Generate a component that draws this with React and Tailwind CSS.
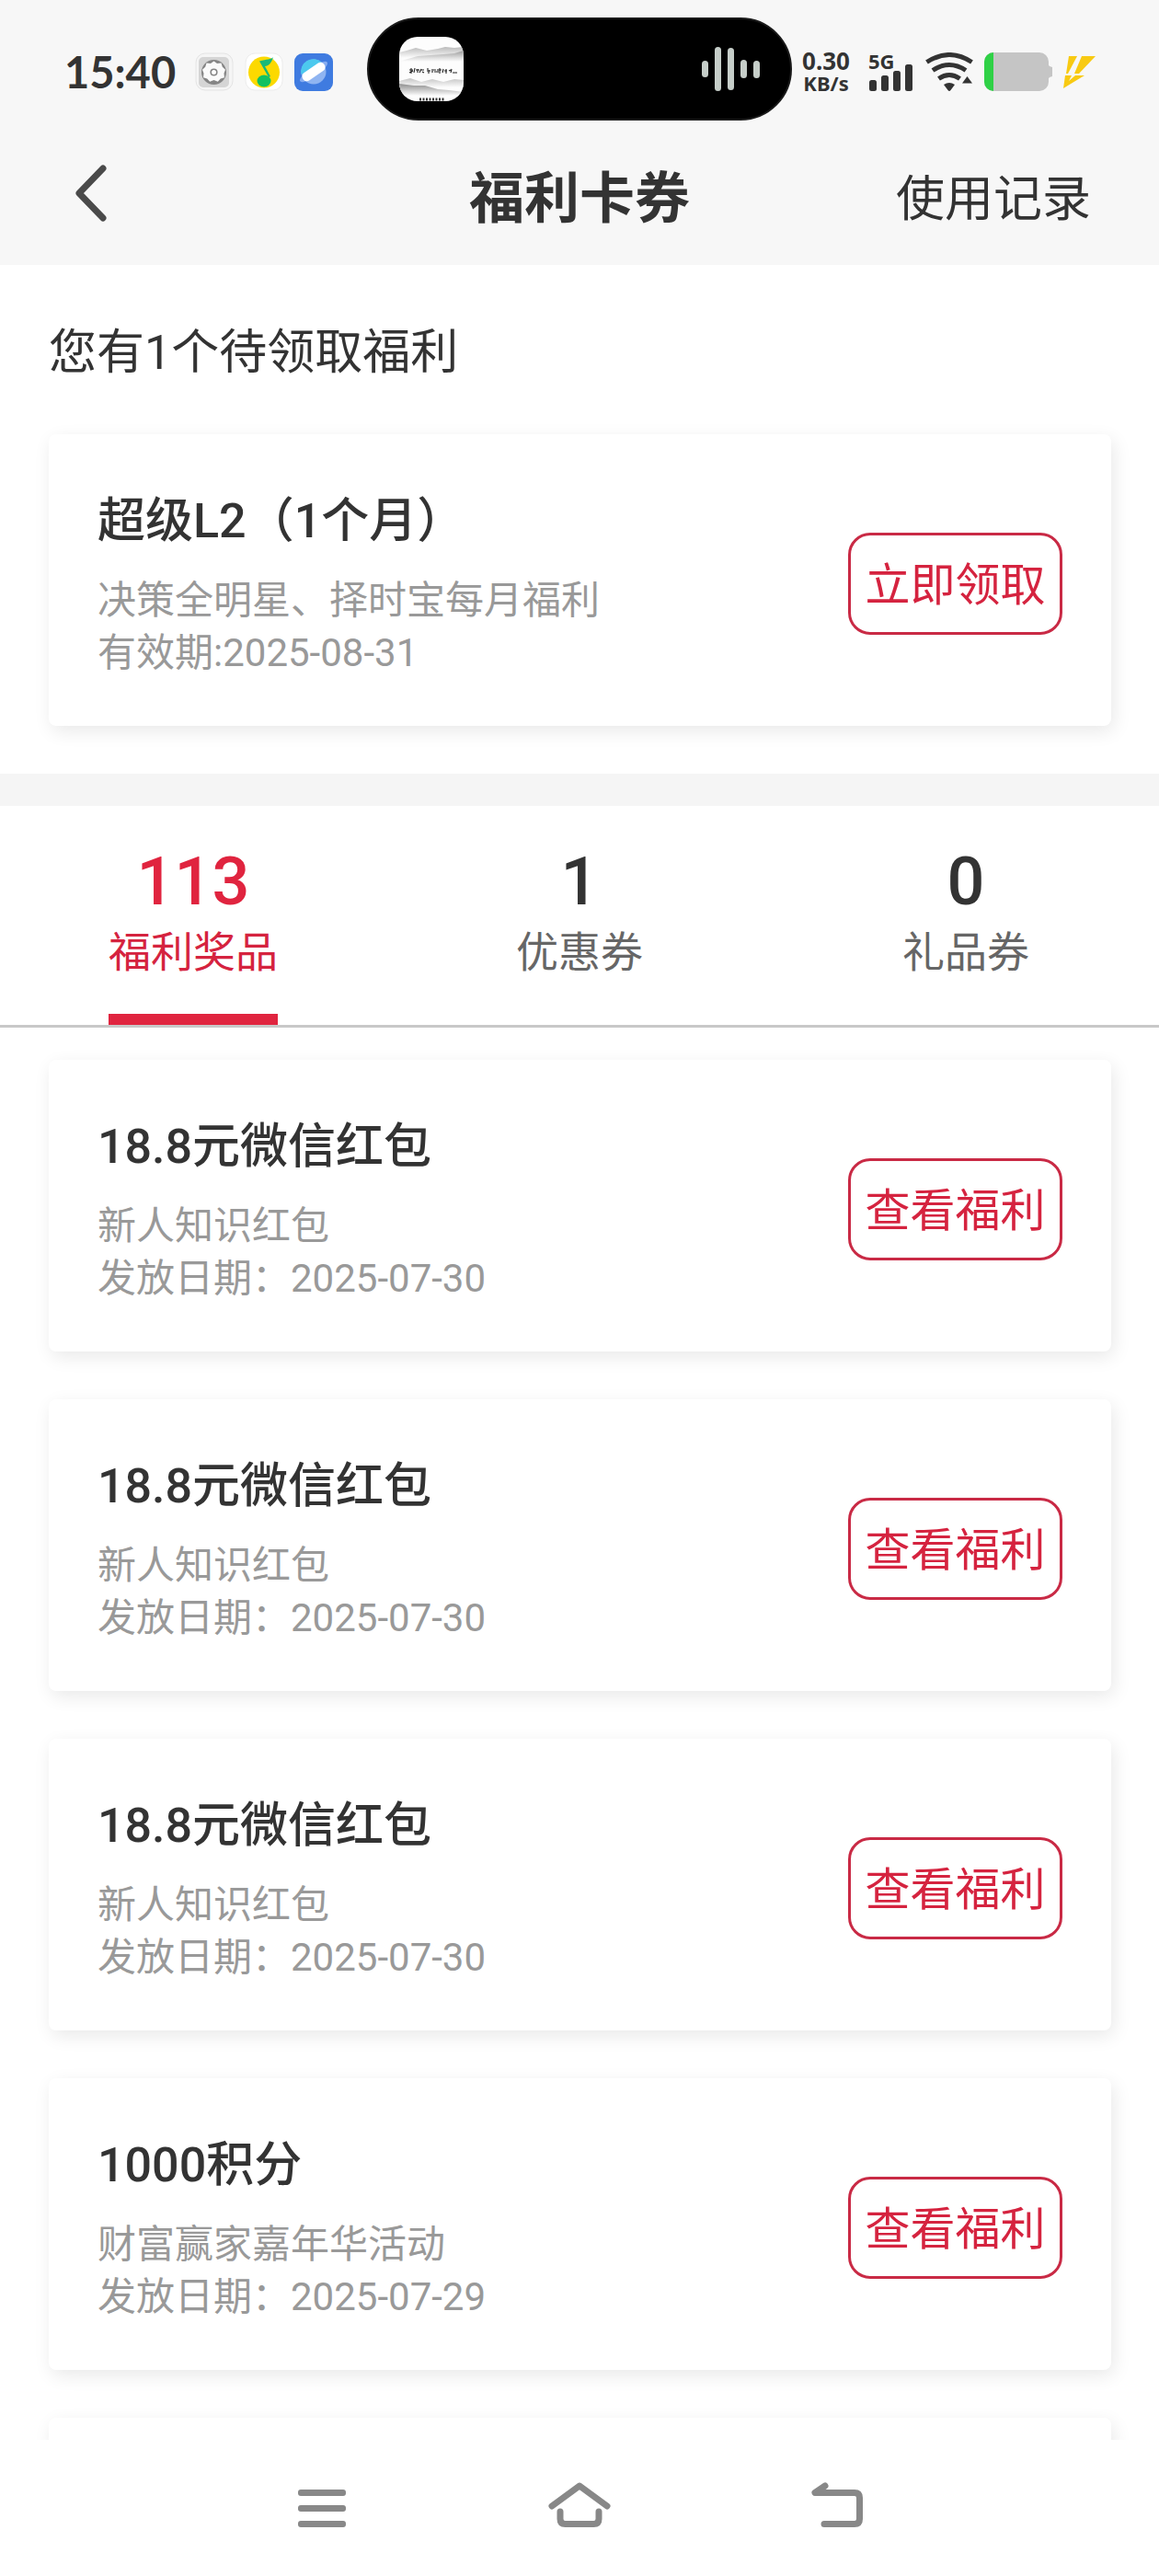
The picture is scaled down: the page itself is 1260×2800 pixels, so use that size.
import React, { useState } from "react";

const PENDING = [
  {
    title: "超级L2（1个月）",
    desc: "决策全明星、择时宝每月福利",
    label: "有效期:",
    date: "2025-08-31",
    action: "立即领取",
  },
];

const TABS = [
  { id: "prize", count: 113, label: "福利奖品" },
  { id: "coupon", count: 1, label: "优惠券" },
  { id: "gift", count: 0, label: "礼品券" },
];

const hongbao = {
  title: "18.8元微信红包",
  desc: "新人知识红包",
  label: "发放日期：",
  date: "2025-07-30",
  action: "查看福利",
};

const points = {
  title: "1000积分",
  desc: "财富赢家嘉年华活动",
  label: "发放日期：",
  date: "2025-07-29",
  action: "查看福利",
};

const PRIZES = [hongbao, hongbao, hongbao, points];

function GearAppIcon() {
  return (
    <svg className="size-[42px]" viewBox="0 0 42 42" aria-hidden="true">
      <rect x="1" y="1" width="40" height="40" rx="10" fill="#f5f5f5" stroke="#e4e4e4" />
      <rect x="4" y="5" width="33" height="33" rx="5" fill="#d5d5d5" />
      <circle cx="20.500" cy="21.500" r="13.500" fill="#858585" />
      <path
        d="M20.500 9.500l3.500 2.500 4.500-.5 1.300 4.200 3.200 3-1.500 4 .5 4.500-4.200 1.200-3 3.300-4.300-1.700-4.300 1.700-3-3.300-4.200-1.200.5-4.500-1.500-4 3.200-3 1.300-4.200 4.500.5z"
        fill="#fafafa"
      />
      <circle cx="20.500" cy="21.500" r="3.300" fill="#fff" stroke="#858585" strokeWidth="1.600" />
    </svg>
  );
}

function MusicAppIcon() {
  return (
    <svg className="size-[42px]" viewBox="0 0 42 42" aria-hidden="true">
      <rect x="1" y="1" width="40" height="40" rx="10" fill="#fff" stroke="#ececec" />
      <circle cx="21" cy="21.500" r="17" fill="#fcd900" />
      <path d="M31 5c-2 3-7 2-15 4.500L26 27l2-1-6-11c4-.5 7-3 9-10z" fill="#17b978" />
      <ellipse cx="21" cy="31" rx="7.500" ry="6.500" fill="#12c161" />
    </svg>
  );
}

function PlanetAppIcon() {
  return (
    <svg className="size-[42px]" viewBox="0 0 42 42" aria-hidden="true">
      <rect x="0" y="1" width="42" height="41" rx="9" fill="#3f7be0" />
      <circle cx="21" cy="21" r="13.500" fill="#8fb4f1" />
      <path d="M7.500 24A13.500 13.500 0 0 1 30 11z" fill="#4cc9ee" />
      <ellipse cx="21" cy="21" rx="18" ry="5" transform="rotate(-35 21 21)" fill="#86acf0" />
      <rect x="7" y="16" width="28" height="10" rx="4.500" transform="rotate(-35 21 21)" fill="#fff" />
    </svg>
  );
}

function AlbumCover() {
  return (
    <svg className="size-[70px] rounded-[20px]" viewBox="0 0 70 70" aria-hidden="true">
      <defs>
        <linearGradient id="mist" x1="0" y1="0" x2="0" y2="1">
          <stop offset="0" stopColor="#8e8e8e" />
          <stop offset="1" stopColor="#fdfdfd" />
        </linearGradient>
      </defs>
      <rect width="70" height="70" fill="#fdfdfd" />
      <path d="M0 17l8-2 10-3 12 3 12-2 8-2 10 1 10-1v12H0z" fill="url(#mist)" opacity=".6" />
      <path d="M6 25l14-4 14-1 14-1 12-1 10-3v12H0z" fill="url(#mist)" opacity=".8" />
      <path d="M0 48l12-3 12 4 12-3 12 3 12-3 10 1v8H0z" fill="url(#mist)" opacity=".5" />
      <path d="M0 51l8 1 8 1 12 0 14 4 12 1 16 2v4H0z" fill="url(#mist)" />
      <path
        d="M11 36h4M13 34v6M11 39l4-2M17 34l-1 5M18 36h4M20 35v4M24 35l-2 4M23 36h4M25 38l2 1M31 34v2M30 37h4M32 36v4M36 35v4M37 36h3M38 38h3M42 35v4M43 36h3M44 34v6M48 35l-1 4M49 37h3M51 35v5M54 37l2-1M57 35l-1 4M58 39h5"
        stroke="#222"
        strokeWidth="1.100"
        fill="none"
      />
      <path d="M22 68h28" stroke="#333" strokeWidth="3" strokeDasharray="2 1.500" />
    </svg>
  );
}

function SoundBars() {
  return (
    <svg className="h-[50px] w-[63px]" viewBox="0 0 63 50" fill="#c6cec9" aria-hidden="true">
      <rect x="0" y="16" width="7" height="18" rx="3.500" />
      <rect x="14" y="1" width="7" height="48" rx="3.500" />
      <rect x="28" y="2" width="7" height="46" rx="3.500" />
      <rect x="42" y="15" width="7" height="20" rx="3.500" />
      <rect x="56" y="16" width="7" height="19" rx="3.500" />
    </svg>
  );
}

function SignalIcon() {
  return (
    <svg className="h-[29px] w-[48px]" viewBox="0 0 48 29" fill="#333" aria-hidden="true">
      <rect x="0" y="17" width="8" height="12" rx="2.500" />
      <rect x="13" y="12" width="8" height="17" rx="2.500" />
      <rect x="26" y="7" width="8" height="22" rx="2.500" />
      <rect x="39" y="0" width="8" height="29" rx="2.500" />
    </svg>
  );
}

function WifiIcon() {
  return (
    <svg className="h-[42px] w-[52px]" viewBox="0 0 52 42" aria-hidden="true">
      <g fill="none" stroke="#333" strokeWidth="5">
        <path d="M1.500 10.500Q26-5.500 50.500 10.500" />
        <path d="M8 19.500Q26 7.500 44 19.500" />
        <path d="M14.500 28.500Q26 20.500 37.500 28.500" />
      </g>
      <path d="M20 35q6-4 12 0l-4.500 6q-1.500 2-3 0z" fill="#333" />
      <path d="M45.500 26l5.500 7.500H40z" fill="#333" />
    </svg>
  );
}

function BatteryIcon() {
  return (
    <svg className="h-[42px] w-[74px]" viewBox="0 0 74 42" role="img" aria-label="电量">
      <defs>
        <clipPath id="cell">
          <rect width="70" height="42" rx="10" />
        </clipPath>
      </defs>
      <path d="M68 13q2 0 3 2l3 1v10l-3 1q-1 2-3 2z" fill="#c5c5c5" />
      <g clipPath="url(#cell)">
        <rect width="70" height="42" fill="#c5c5c5" />
        <rect width="10" height="42" fill="#2fd146" />
      </g>
    </svg>
  );
}

function BoltIcon() {
  return (
    <svg className="h-[35px] w-[35px]" viewBox="0 0 35 35" fill="#f8ca12" aria-hidden="true">
      <path d="M6 0h9L5 19H3z" />
      <path d="M20 0h15L17 19h-5z" />
      <path d="M2 21h7l-3 6 7-6h10L0 35z" />
    </svg>
  );
}

function StatusBar() {
  return (
    <div className="grid h-[150px] grid-cols-[1fr_462px_1fr] items-center text-[#333]">
      <div className="flex items-center pt-1.5 pl-[70px]">
        <time className="w-[142px] font-['Lato',sans-serif] text-[47px] leading-[50px] font-bold">15:40</time>
        <div className="flex gap-3">
          <GearAppIcon />
          <MusicAppIcon />
          <PlanetAppIcon />
        </div>
      </div>
      <div className="flex h-[112px] items-center justify-between rounded-full border-2 border-[#1a1a1a] bg-black px-[33px]">
        <AlbumCover />
        <SoundBars />
      </div>
      <div className="flex items-center pt-1.5 pl-[7px] font-['Noto_Sans',sans-serif] font-bold">
        <div className="flex w-[60px] flex-col text-center">
          <span className="text-[26px] leading-[24px]">0.30</span>
          <span className="text-[22px] leading-[24px]">KB/s</span>
        </div>
        <div className="relative ml-4 flex h-[42px] w-[50px] flex-col items-center justify-end">
          <span className="absolute top-0 left-0 text-[22px] leading-[18px]">5G</span>
          <SignalIcon />
        </div>
        <div className="ml-3 flex items-center gap-3">
          <WifiIcon />
          <BatteryIcon />
          <BoltIcon />
        </div>
      </div>
    </div>
  );
}

function TitleBar() {
  return (
    <div className="grid h-[138px] grid-cols-[1fr_auto_1fr] items-center px-[74px] pb-[18px] text-[#333]">
      <button type="button" aria-label="返回" className="justify-self-start">
        <svg className="h-[64px] w-[46px]" viewBox="0 0 46 64" aria-hidden="true">
          <path
            d="M38 5L12 32l26 27"
            fill="none"
            stroke="#4a4a4a"
            strokeWidth="7"
            strokeLinecap="round"
            strokeLinejoin="round"
          />
        </svg>
      </button>
      <h1 className="pt-3.5 text-[60px] leading-[80px] font-bold">福利卡券</h1>
      <a href="#records" className="justify-self-end pt-3.5 text-[53px] leading-[80px]">
        使用记录
      </a>
    </div>
  );
}

function BenefitCard({ item }) {
  return (
    <article className="flex items-center justify-between rounded-lg bg-white px-[53px] pt-[58px] pb-[51px] shadow-[3px_6px_20px_rgba(0,0,0,0.09)]">
      <div className="pt-[5px]">
        <h2 className="text-[52px] leading-[64px] font-medium text-[#333]">{item.title}</h2>
        <p className="mt-[25px] text-[42px] leading-[57px] text-[#999]">{item.desc}</p>
        <p className="text-[42px] leading-[57px] text-[#999]">
          {item.label}
          <time>{item.date}</time>
        </p>
      </div>
      <button
        type="button"
        className="h-[111px] w-[233px] shrink-0 rounded-3xl border-3 border-[#c92a45] pt-1.5 text-[49px] leading-[60px] whitespace-nowrap text-[#d5233f]"
      >
        {item.action}
      </button>
    </article>
  );
}

function LoadingCard() {
  return <div className="h-[317px] rounded-lg bg-white shadow-[3px_6px_20px_rgba(0,0,0,0.09)]" aria-hidden="true" />;
}

function Tab({ tab, active, onSelect }) {
  return (
    <button
      type="button"
      role="tab"
      aria-selected={active}
      onClick={onSelect}
      className="flex flex-col items-center pt-[47px]"
    >
      <span className={`text-[72px] leading-[72px] font-medium ${active ? "text-[#e0243f]" : "text-[#333]"}`}>
        {tab.count}
      </span>
      <span
        className={`mt-3 border-b-12 pb-[39px] text-[46px] leading-[56px] ${
          active ? "border-[#e0243f] text-[#d5233f]" : "border-transparent text-[#666]"
        }`}
      >
        {tab.label}
      </span>
    </button>
  );
}

function SystemNav() {
  return (
    <nav className="grid h-[148px] shrink-0 grid-cols-3 items-center justify-items-center bg-white px-[210px] pb-1.5">
      <button type="button" aria-label="最近任务">
        <svg className="h-[52px] w-[72px]" viewBox="0 0 72 52" fill="#888" aria-hidden="true">
          <rect x="10" y="9" width="52" height="7" rx="3" />
          <rect x="10" y="26" width="52" height="7" rx="3" />
          <rect x="10" y="43" width="52" height="7" rx="3" />
        </svg>
      </button>
      <button type="button" aria-label="主页">
        <svg
          className="h-[52px] w-[72px]"
          viewBox="0 0 72 52"
          fill="none"
          stroke="#888"
          strokeWidth="7"
          strokeLinecap="round"
          strokeLinejoin="round"
          aria-hidden="true"
        >
          <path d="M6 27L36 5l30 22" />
          <path d="M15 33v8q0 5.500 5.500 5.500h31q5.500 0 5.500-5.500v-8" />
        </svg>
      </button>
      <button type="button" aria-label="返回上一级">
        <svg
          className="h-[52px] w-[72px]"
          viewBox="0 0 72 52"
          fill="none"
          stroke="#888"
          strokeWidth="7"
          strokeLinecap="round"
          strokeLinejoin="round"
          aria-hidden="true"
        >
          <path d="M23 5l-11 7.500h43q5.500 0 5.500 5.500v23q0 5.500-5.500 5.500H22" />
        </svg>
      </button>
    </nav>
  );
}

export default function App() {
  const [activeTab, setActiveTab] = useState("prize");

  return (
    <div className="flex h-screen flex-col bg-white font-['Roboto','Noto_Sans_CJK_SC',sans-serif]" lang="zh-CN">
      <header className="shrink-0 bg-[#f7f7f7]">
        <StatusBar />
        <TitleBar />
      </header>

      <main className="min-h-0 flex-1 overflow-hidden">
        <section className="pt-[61px] pr-[52px] pb-[52px] pl-[53px]">
          <p className="mb-[53px] text-[52px] leading-[70px] text-[#333]">您有1个待领取福利</p>
          {PENDING.map((item) => (
            <BenefitCard key={item.title} item={item} />
          ))}
        </section>

        <div className="h-[35px] bg-[#f5f5f5]" />

        <div role="tablist" className="grid grid-cols-3 border-b-3 border-[#c8c8c8]">
          {TABS.map((tab) => (
            <Tab key={tab.id} tab={tab} active={tab.id === activeTab} onSelect={() => setActiveTab(tab.id)} />
          ))}
        </div>

        <section className="flex flex-col gap-[52px] pt-[35px] pr-[52px] pl-[53px]">
          {PRIZES.map((item, index) => (
            <BenefitCard key={index} item={item} />
          ))}
          <LoadingCard />
        </section>
      </main>

      <SystemNav />
    </div>
  );
}
